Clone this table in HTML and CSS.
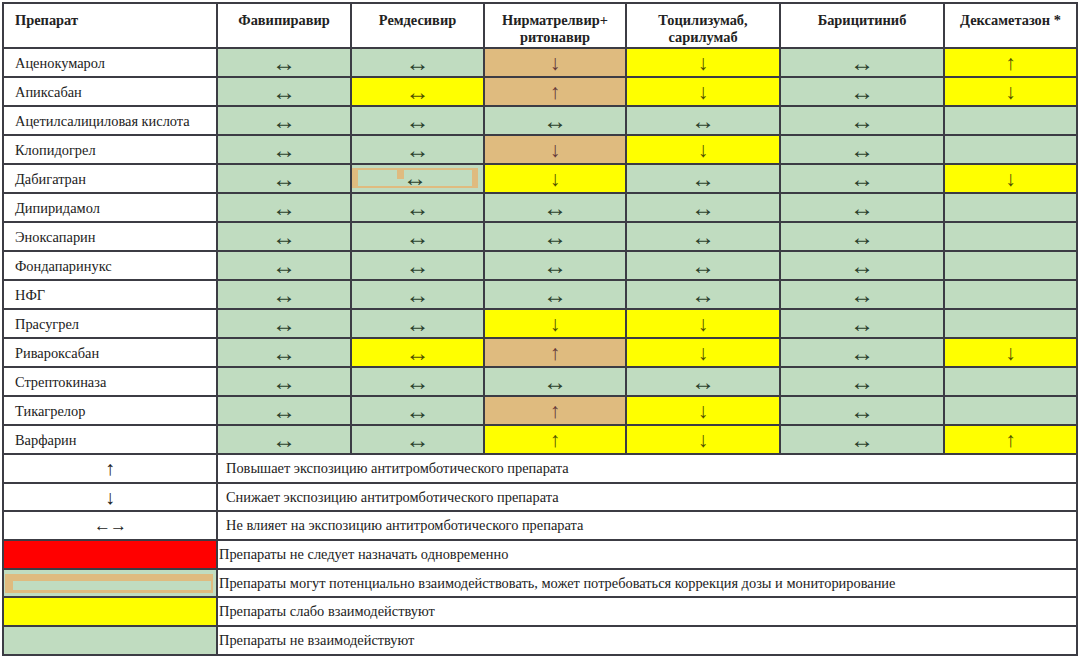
FILE: index.html
```html
<!DOCTYPE html>
<html lang="ru">
<head>
<meta charset="utf-8">
<title>Взаимодействие препаратов</title>
<link rel="stylesheet" href="styles.css">
</head>
<body>
<table class="grid">
  <colgroup>
    <col class="c-name"><col class="c-fav"><col class="c-rem"><col class="c-nir"><col class="c-toc"><col class="c-bar"><col class="c-dex">
  </colgroup>
  <thead>
    <tr class="head">
      <th class="h-name">Препарат</th>
      <th>Фавипиравир</th>
      <th>Ремдесивир</th>
      <th>Нирматрелвир+<br>ритонавир</th>
      <th>Тоцилизумаб,<br>сарилумаб</th>
      <th>Барицитиниб</th>
      <th>Дексаметазон *</th>
    </tr>
  </thead>
  <tbody>
    <tr class="row"><td class="name">Аценокумарол</td><td class="g">↔</td><td class="g">↔</td><td class="t">↓</td><td class="y">↓</td><td class="g">↔</td><td class="y">↑</td></tr>
    <tr class="row"><td class="name">Апиксабан</td><td class="g">↔</td><td class="y lr">↔</td><td class="t">↑</td><td class="y">↓</td><td class="g">↔</td><td class="y">↓</td></tr>
    <tr class="row"><td class="name">Ацетилсалициловая кислота</td><td class="g">↔</td><td class="g">↔</td><td class="g">↔</td><td class="g">↔</td><td class="g">↔</td><td class="g"></td></tr>
    <tr class="row"><td class="name">Клопидогрел</td><td class="g">↔</td><td class="g">↔</td><td class="t">↓</td><td class="y">↓</td><td class="g">↔</td><td class="g"></td></tr>
    <tr class="row"><td class="name">Дабигатран</td><td class="g">↔</td><td class="g boxed"><div class="tanbox">↔</div></td><td class="y">↓</td><td class="g">↔</td><td class="g">↔</td><td class="y">↓</td></tr>
    <tr class="row"><td class="name">Дипиридамол</td><td class="g">↔</td><td class="g">↔</td><td class="g">↔</td><td class="g">↔</td><td class="g">↔</td><td class="g"></td></tr>
    <tr class="row"><td class="name">Эноксапарин</td><td class="g">↔</td><td class="g">↔</td><td class="g">↔</td><td class="g">↔</td><td class="g">↔</td><td class="g"></td></tr>
    <tr class="row"><td class="name">Фондапаринукс</td><td class="g">↔</td><td class="g">↔</td><td class="g">↔</td><td class="g">↔</td><td class="g">↔</td><td class="g"></td></tr>
    <tr class="row"><td class="name">НФГ</td><td class="g">↔</td><td class="g">↔</td><td class="g">↔</td><td class="g">↔</td><td class="g">↔</td><td class="g"></td></tr>
    <tr class="row"><td class="name">Прасугрел</td><td class="g">↔</td><td class="g">↔</td><td class="y">↓</td><td class="y">↓</td><td class="g">↔</td><td class="g"></td></tr>
    <tr class="row"><td class="name">Ривароксабан</td><td class="g">↔</td><td class="y lr">↔</td><td class="t">↑</td><td class="y">↓</td><td class="g">↔</td><td class="y">↓</td></tr>
    <tr class="row"><td class="name">Стрептокиназа</td><td class="g">↔</td><td class="g">↔</td><td class="g">↔</td><td class="g">↔</td><td class="g">↔</td><td class="g"></td></tr>
    <tr class="row"><td class="name">Тикагрелор</td><td class="g">↔</td><td class="g">↔</td><td class="t">↑</td><td class="y">↓</td><td class="g">↔</td><td class="g"></td></tr>
    <tr class="row"><td class="name">Варфарин</td><td class="g">↔</td><td class="g">↔</td><td class="y">↑</td><td class="y">↓</td><td class="g">↔</td><td class="y">↑</td></tr>
    <tr class="legend"><td class="sym">↑</td><td class="desc" colspan="6">Повышает экспозицию антитромботического препарата</td></tr>
    <tr class="legend"><td class="sym">↓</td><td class="desc" colspan="6">Снижает экспозицию антитромботического препарата</td></tr>
    <tr class="legend"><td class="sym wide">←→</td><td class="desc" colspan="6">Не влияет на экспозицию антитромботического препарата</td></tr>
    <tr class="legend"><td class="swatch red"></td><td class="desc tight" colspan="6">Препараты не следует назначать одновременно</td></tr>
    <tr class="legend"><td class="swatch g"><div class="tanswatch"><div class="tanswatch-in"></div></div></td><td class="desc tight" colspan="6">Препараты могут потенциально взаимодействовать, может потребоваться коррекция дозы и мониторирование</td></tr>
    <tr class="legend"><td class="swatch y"></td><td class="desc tight" colspan="6">Препараты слабо взаимодействуют</td></tr>
    <tr class="legend"><td class="swatch g"></td><td class="desc tight" colspan="6">Препараты не взаимодействуют</td></tr>
  </tbody>
</table>
</body>
</html>
```
FILE: styles.css
```css
html, body {
  margin: 0;
  padding: 0;
  background: #ffffff;
}
body {
  font-family: "Liberation Serif", "Times New Roman", serif;
  color: #1f1f1f;
}
.grid {
  border-collapse: collapse;
  table-layout: fixed;
  width: 1076px;
  margin: 2px 0 0 2px;
  font-size: 14.4px;
}
.c-name { width: 214px; }
.c-fav { width: 134px; }
.c-rem { width: 133px; }
.c-nir { width: 142px; }
.c-toc { width: 154px; }
.c-bar { width: 164px; }
.c-dex { width: 133px; }

.grid th,
.grid td {
  border: 2px solid #3c3c44;
  padding: 0;
}
.head { height: 45px; }
.head th {
  font-weight: bold;
  vertical-align: top;
  text-align: center;
  line-height: 17px;
  padding-top: 8px;
  color: #222;
}
.head .h-name {
  text-align: left;
  padding-left: 11px;
}
.row { height: 29px; }
.row td {
  text-align: center;
  vertical-align: middle;
  font-size: 21px;
  line-height: 20px;
}
.row td.g,
.row td.lr {
  font-size: 24px;
}
.row td.name {
  text-align: left;
  padding-left: 11px;
  background: #ffffff;
  color: #222;
  font-size: 14.4px;
}
.g { background: #c0dcc0; color: #2a402c; }
.y { background: #ffff00; color: #4f4f00; }
.t { background: #dfbb7f; color: #643838; }
.red { background: #ff0000; }

.boxed { padding: 0; }
.tanbox {
  position: relative;
  margin: 3px 5px 4px 0;
  height: 16px;
  line-height: 16px;
  border: 2px solid #dfbb7f;
  border-left-width: 6px;
  border-right-width: 6px;
  text-align: center;
}
.tanbox::before {
  content: "";
  position: absolute;
  left: 39px;
  top: 0;
  width: 7px;
  height: 9px;
  background: #dfbb7f;
}

.legend { height: 28.7px; }
.legend td {
  vertical-align: middle;
}
.legend .sym {
  text-align: center;
  color: #222;
  background: #fff;
  font-size: 20px;
  line-height: 20px;
}
.legend .sym.wide {
  font-size: 17px;
  letter-spacing: -1px;
}
.legend .desc {
  text-align: left;
  padding-left: 8px;
  background: #fff;
  color: #222;
}
.legend .desc.tight {
  padding-left: 1px;
}
.legend .swatch { padding: 0; }
.tanswatch {
  margin: 2px 3px 2px 1px;
  background: #dfbb7f;
  padding: 7px 2px 3px 8px;
}
.tanswatch-in {
  height: 9px;
  background: #c0dcc0;
}
```
